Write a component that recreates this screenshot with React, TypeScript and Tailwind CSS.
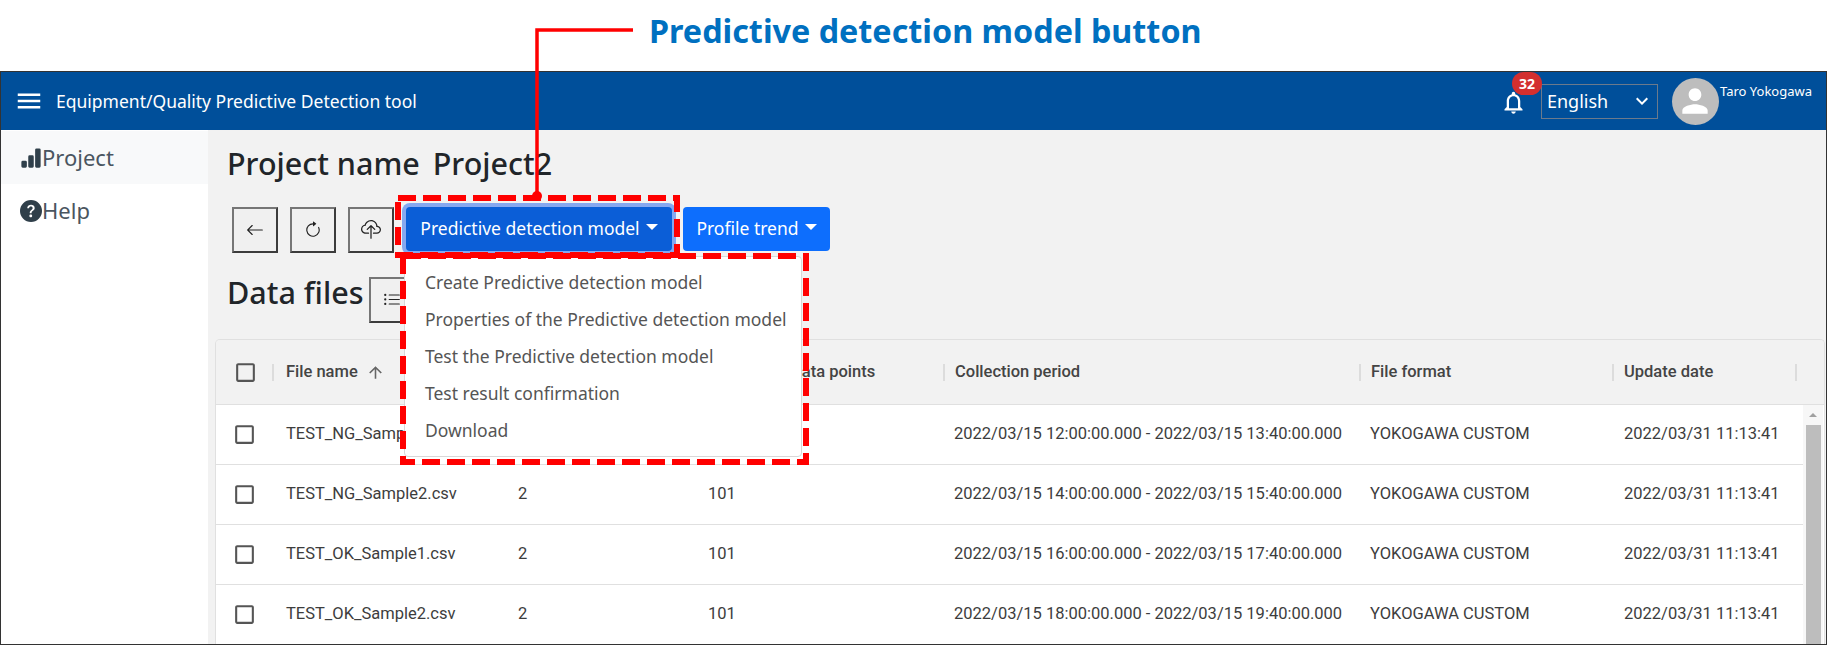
import { BsArrowClockwise, BsArrowLeft, BsBarChartFill, BsCloudUpload, BsListUl, BsQuestionCircleFill } from 'react-icons/bs'
import { MdArrowUpward, MdCheckBoxOutlineBlank, MdKeyboardArrowDown, MdMenu, MdNotificationsNone, MdPerson } from 'react-icons/md'

const uiFont = "font-['Noto_Sans',sans-serif]"
const tableFont = "font-['Roboto',sans-serif]"
const gridCols = 'grid grid-cols-[57px_232px_190px_247px_416px_253px_185px]'

const rows = [
  { name: 'TEST_NG_Sample1.csv', period: '2022/03/15 12:00:00.000 - 2022/03/15 13:40:00.000' },
  { name: 'TEST_NG_Sample2.csv', period: '2022/03/15 14:00:00.000 - 2022/03/15 15:40:00.000' },
  { name: 'TEST_OK_Sample1.csv', period: '2022/03/15 16:00:00.000 - 2022/03/15 17:40:00.000' },
  { name: 'TEST_OK_Sample2.csv', period: '2022/03/15 18:00:00.000 - 2022/03/15 19:40:00.000' },
]

const menuItems = [
  'Create Predictive detection model',
  'Properties of the Predictive detection model',
  'Test the Predictive detection model',
  'Test result confirmation',
  'Download',
]

function Caret() {
  return <span className="ml-[6px] inline-block h-0 w-0 border-x-[6px] border-t-[6px] border-x-transparent border-t-white -translate-y-[2px]" />
}

function Sep() {
  return <span className="mr-[10px] h-[17px] w-[2px] shrink-0 bg-[#dcdcdc]" />
}

function IconButton({ children }: { children: React.ReactNode }) {
  return (
    <button className="flex h-[46px] w-[46px] items-center justify-center border-2 border-[#767676] border-b-[#3c3c3c] border-r-[#3c3c3c] bg-[#f0f0f0] text-[#222]">
      {children}
    </button>
  )
}

function Annotations() {
  return (
    <svg className="pointer-events-none absolute left-0 top-0 z-20" width="1827" height="646">
      <path d="M633 30H537V196" fill="none" stroke="#ff0000" strokeWidth="3.5" />
      <circle cx="537" cy="196" r="5" fill="#ff0000" />
      <rect x="398" y="198" width="279" height="57" fill="none" stroke="#ff0000" strokeWidth="6" strokeDasharray="18 7" />
      <rect x="403" y="256" width="403" height="206" fill="none" stroke="#ff0000" strokeWidth="6" strokeDasharray="18 7" />
    </svg>
  )
}

function FileTable() {
  return (
    <div className={`mt-[16px] -ml-[12px] mr-[1px] flex-1 overflow-hidden rounded-t-[5px] border border-b-0 border-[#e0e0e0] ${tableFont}`}>
      <div className={`${gridCols} h-[65px] items-center border-b border-[#e0e0e0] bg-[#f2f2f2] pl-[1px] text-[16.5px] font-medium text-[#444]`}>
        <div className="flex items-center justify-end">
          <MdCheckBoxOutlineBlank className="mr-[14px] text-[25px] text-[#555]" />
          <span className="h-[17px] w-[2px] bg-[#dcdcdc]" />
        </div>
        <div className="flex items-center pl-[12px]">
          <span>File name</span>
          <MdArrowUpward className="ml-[8px] text-[19px] text-[#666]" />
        </div>
        <div />
        <div className="flex items-center pl-[95px]">Data points</div>
        <div className="flex items-center"><Sep />Collection period</div>
        <div className="flex items-center"><Sep />File format</div>
        <div className="flex items-center justify-between"><div className="flex items-center"><Sep />Update date</div><span className="h-[17px] w-[2px] bg-[#dcdcdc]" /></div>
      </div>
      <div className="flex bg-white">
        <div className="w-[1587px] shrink-0 pl-[1px]">
          {rows.map((r) => (
            <div key={r.name} className={`${gridCols} -ml-[1px] h-[60px] items-center border-b border-[#e0e0e0] pl-[1px] text-[16.5px] text-[#3d3d3d]`}>
              <div className="flex items-center pl-[15px]">
                <MdCheckBoxOutlineBlank className="text-[25px] text-[#555]" />
              </div>
              <div className="pl-[12px]">{r.name}</div>
              <div className="pl-[12px]">2</div>
              <div className="pl-[12px]">101</div>
              <div className="whitespace-nowrap pl-[11px]">{r.period}</div>
              <div className="pl-[11px]">YOKOGAWA CUSTOM</div>
              <div className="whitespace-nowrap pl-[12px]">2022/03/31 11:13:41</div>
            </div>
          ))}
        </div>
        <div className="flex w-[20px] shrink-0 flex-col items-center bg-[#f7f7f7]">
          <div className="flex h-[20px] items-center">
            <span className="h-0 w-0 border-x-[4px] border-b-[4px] border-x-transparent border-b-[#a0a0a0]" />
          </div>
          <div className="w-[15px] flex-1 bg-[#bdbdbd]" />
        </div>
      </div>
    </div>
  )
}

export default function App() {
  return (
    <div className={`relative h-[646px] w-[1827px] overflow-hidden bg-white ${uiFont}`}>
      <div className="flex h-[71px] items-center pb-[11px] pl-[649px] text-[32.3px] font-bold text-[#0070c0]">
        Predictive detection model button
      </div>

      <div className="flex h-[574px] flex-col border border-[#333]">
        <header className="flex h-[58px] shrink-0 items-center bg-[#004f9a] text-white">
          <MdMenu className="ml-[13px] text-[30px]" />
          <span className="ml-[12px] text-[17.5px]">Equipment/Quality Predictive Detection tool</span>
          <div className="ml-auto flex items-center">
            <div className="relative mt-[3px]">
              <MdNotificationsNone className="text-[27px]" />
              <span className="absolute -top-[17px] left-[12px] flex h-[23px] w-[30px] items-center justify-center rounded-full bg-[#d32f2f] text-[14px] font-bold">32</span>
            </div>
            <div className="ml-[14px] flex h-[35px] w-[117px] items-center justify-between border border-[#6c7a8c] pl-[5px] pr-[3px] text-[18px]">
              English
              <MdKeyboardArrowDown className="text-[24px]" />
            </div>
            <div className="ml-[14px] flex h-[47px] w-[47px] items-center justify-center overflow-hidden rounded-full bg-[#bdbdbd]">
              <MdPerson className="text-[38px] text-white" />
            </div>
            <span className="mb-[18px] ml-[1px] mr-[14px] text-[13px]">Taro Yokogawa</span>
          </div>
        </header>

        <div className="flex min-h-0 flex-1">
          <aside className="w-[207px] shrink-0 bg-white pt-[1px] text-[22px] text-[#4a5560]">
            <div className="flex h-[53px] items-center bg-[#f8f9fa] pl-[19px]">
              <BsBarChartFill className="text-[22px] text-[#2f3f4a]" />
              <span>Project</span>
            </div>
            <div className="flex h-[53px] items-center pl-[19px]">
              <BsQuestionCircleFill className="text-[22px] text-[#2f3f4a]" />
              <span>Help</span>
            </div>
          </aside>

          <main className="flex min-w-0 flex-1 flex-col bg-[#f2f2f2] pl-[19px]">
            <h1 className="mt-[14px] h-[38px] text-[30.5px] font-medium leading-[38px] text-[#212529]">Project name <span className="ml-[5px]">Project2</span></h1>

            <div className="relative mt-[25px] ml-[5px] flex h-[46px] items-center gap-[12px]">
              <IconButton><BsArrowLeft className="text-[18px]" /></IconButton>
              <IconButton><BsArrowClockwise className="text-[18px]" /></IconButton>
              <IconButton><BsCloudUpload className="text-[20px]" /></IconButton>
              <div className="-mt-[3px] flex h-[44px] gap-[11px] text-[17.5px] text-white">
                <button className="flex w-[266px] items-center justify-center rounded-[4px] bg-[#0b5ed7] shadow-[0_0_0_4px_#86a8f0]">
                  Predictive detection model<Caret />
                </button>
                <button className="flex w-[147px] items-center justify-center rounded-[4px] bg-[#0d6efd]">
                  Profile trend<Caret />
                </button>
              </div>
              <div className="absolute left-[172px] top-[49px] z-10 h-[201px] w-[398px] rounded-[4px] border border-[#d8d8d8] bg-white py-[7px] text-[17.5px] text-[#555]">
                {menuItems.map((m) => (
                  <div key={m} className="flex h-[37px] items-center pl-[20px]">{m}</div>
                ))}
              </div>
            </div>

            <div className="mt-[24px] flex items-start">
              <h2 className="h-[46px] text-[30.5px] font-medium leading-[30px] text-[#212529]">Data files</h2>
              <div className="ml-[6px]">
                <IconButton><BsListUl className="text-[18px]" /></IconButton>
              </div>
            </div>

            <FileTable />
          </main>
        </div>
      </div>

      <Annotations />
    </div>
  )
}
